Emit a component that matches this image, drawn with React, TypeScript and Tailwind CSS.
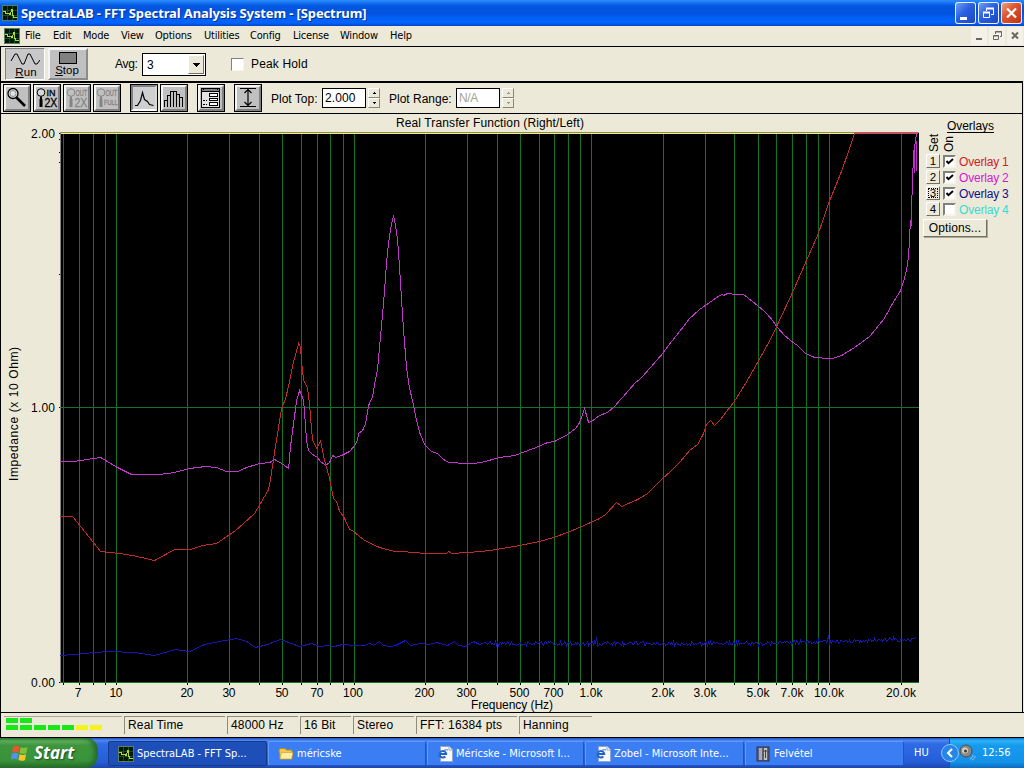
import { useState } from "react";
import type { ReactNode } from "react";

const menus = [
  { name: "File", width: "w-[28px]" },
  { name: "Edit", width: "w-[30px]" },
  { name: "Mode", width: "w-[38px]" },
  { name: "View", width: "w-[34px]" },
  { name: "Options", width: "w-[49px]" },
  { name: "Utilities", width: "w-[46px]" },
  { name: "Config", width: "w-[43px]" },
  { name: "License", width: "w-[47px]" },
  { name: "Window", width: "w-[50px]" },
  { name: "Help", width: "w-[30px]" },
];

const overlays = [
  { id: 1, color: "text-[#d01c24]", on: true },
  { id: 2, color: "text-[#d417d4]", on: true },
  { id: 3, color: "text-[#10108c]", on: true },
  { id: 4, color: "text-[#35dcd4]", on: false },
];

const statusCells = [
  { label: "Real Time", width: "w-[101px]" },
  { label: "48000 Hz", width: "w-[71px]" },
  { label: "16 Bit", width: "w-[51px]" },
  { label: "Stereo", width: "w-[61px]" },
  { label: "FFT: 16384 pts", width: "w-[101px]" },
  { label: "Hanning", width: "w-[73px]" },
];

const gridX = [
  63, 79, 93, 105, 116, 187, 229, 259, 282, 301, 317, 330, 343, 354, 425, 467,
  497, 520, 539, 554, 568, 580, 591, 663, 705, 734, 758, 776, 792, 806, 818,
  829, 901,
];

const freqLabels = [
  { x: 78, text: "7", w: 6 },
  { x: 116, text: "10", w: 13 },
  { x: 187, text: "20", w: 13 },
  { x: 229, text: "30", w: 13 },
  { x: 282, text: "50", w: 13 },
  { x: 317, text: "70", w: 13 },
  { x: 353, text: "100", w: 20 },
  { x: 424.5, text: "200", w: 20 },
  { x: 466.5, text: "300", w: 20 },
  { x: 519.5, text: "500", w: 20 },
  { x: 553.5, text: "700", w: 20 },
  { x: 591, text: "1.0k", w: 23 },
  { x: 663, text: "2.0k", w: 23 },
  { x: 705, text: "3.0k", w: 23 },
  { x: 758, text: "5.0k", w: 23 },
  { x: 792, text: "7.0k", w: 23 },
  { x: 829, text: "10.0k", w: 30 },
  { x: 901, text: "20.0k", w: 30 },
];

const overlay1 =
  "60,516 73,516 101,551 120,553 133,555 155,560 175,549 191,549 203,545 217,543 236,530 255,513 269,489 271,478 276,445 282,408 286,398 290,381 293,365 299,343 301,347 302,362 304,380 308,388 310,404 311,418 313,440 317,448 321,440 325,460 330,478 334,498 337,501 340,511 344,516 350,529 354,531 365,540 380,547 395,551 402,551 415,552 425,553 447,553 449,551 452,553 467,552 482,551 497,549 520,545 540,541 554,537 568,532 580,527 591,522 600,518 606,514 617,502 622,506 638,499 648,493 656,485 663,478 672,470 680,462 690,450 698,444 704,433 707,424 711,420 715,425 721,419 727,411 734,402 746,383 758,362 768,344 777,326 792,294 806,262 818,235 829,203 837,183 843,168 855,133 918,133";

const overlay2 =
  "60,461 74,461 101,457 116,466 132,474 160,474 175,472 190,468 206,466 217,467 227,471 238,471 247,467 260,463 270,462 275,459 282,463 289,468 291,445 297,400 300,390 304,400 307,440 309,450 313,454 318,457 321,461 326,465 330,462 333,455 336,457 342,455 350,451 355,445 358,439 359,433 363,430 366,423 369,405 373,396 375,384 378,368 381,335 384,302 387,262 389,242 391,228 394,215 396,225 398,240 400,268 402,300 404,330 407,368 410,388 414,405 416,416 420,432 425,444 432,451 438,453 444,459 449,462 467,463 472,463 482,462 500,457 515,455 539,446 548,442 555,441 568,434 576,428 580,422 585,408 589,422 592,421 600,415 608,412 615,406 620,400 623,397 628,391 636,382 641,378 650,368 663,353 672,341 680,331 690,318 700,309 710,302 717,297 722,294 724,295 728,293 736,294 744,294 749,298 758,305 766,312 773,320 777,326 785,335 792,341 798,345 806,353 815,357 829,358 833,358 842,355 855,347 870,336 884,319 893,303 901,290 904,281 907,269 909,256 910,235 911,220 912,225 912,205 913,180 914,150 915,172 915,146 917,133";

// Low-level trace: hand-read points up to 500 Hz, bin noise above that.
function buildOverlay3() {
  let points =
    "60,655 75,654 95,652 110,651 135,652 155,655 176,649 190,651 205,644 220,641 237,638 247,641 256,647 268,644 281,639 300,646 312,643 320,646 328,645 335,646 343,644 356,645 365,645 370,643 374,645 380,641 384,645 390,646 396,645 402,642 406,640 411,645 421,643 430,644 437,642 448,645 455,641 459,645 466,646 474,641 480,644 486,642";
  let seed = 17;
  for (let x = 488; x < 917; x++) {
    seed = (seed * 1103515245 + 12345) % 2147483648;
    const r = seed / 2147483648;
    const base = x < 760 ? 643 : 643 - (x - 760) * 0.028;
    let y = base + (r - 0.5) * 4;
    if (x === 597 || x === 829) y = base - 6;
    if (x === 598 || x === 830) y = base + 3;
    points += ` ${x},${Math.round(y)}`;
  }
  return points;
}

const overlay3 = buildOverlay3();

function AppIcon() {
  return (
    <svg width="16" height="16" viewBox="0 0 16 16" shapeRendering="crispEdges">
      <rect width="16" height="16" fill="#5d7d5f" />
      <rect x="1" y="1" width="14" height="14" fill="#04170a" />
      <path d="M5.5 1v14M10.5 1v14M1 5.5h14M1 10.5h14" stroke="#0c5420" />
      <path
        d="M1 6.500h2l1 2h3l1 1 2-5 1 6 1 2h3"
        fill="none"
        stroke="#b7d82c"
        strokeWidth="1.200"
      />
    </svg>
  );
}

function ToolButton({
  children,
  pressed,
  className = "",
}: {
  children: ReactNode;
  pressed?: boolean;
  className?: string;
}) {
  return (
    <button
      className={`h-7 w-7 border border-black ${
        pressed ? "bg-[#cfcfcf]" : "bg-[#c0c0c0]"
      } ${className}`}
    >
      <div
        className={`h-full w-full border-2 ${
          pressed
            ? "border-t-[#808080] border-l-[#808080] border-r-[#d8d8d8] border-b-white"
            : "border-t-[#f4f4f4] border-l-[#f4f4f4] border-r-[#808080] border-b-[#808080]"
        }`}
      >
        <svg
          width="26"
          height="26"
          viewBox="0 0 26 26"
          className="-mt-0.5 -ml-0.5 max-w-none"
          fontFamily="'Liberation Sans', sans-serif"
        >
          {children}
        </svg>
      </div>
    </button>
  );
}

function ZoomGlyph({
  top,
  bottom,
  disabled,
}: {
  top: string;
  bottom: string;
  disabled?: boolean;
}) {
  const color = disabled ? "#858585" : "#000";
  return (
    <g>
      <circle cx="7" cy="7.5" r="3.8" fill={disabled ? "none" : "#d8d8d8"} stroke={color} />
      <path d="M7 11.5V14" stroke={color} strokeWidth="2" />
      <path d="M7 14v8" stroke={color} strokeWidth="3" />
      <g fill={color} stroke={color} strokeWidth="0.3">
        <text
          transform={top === "IN" ? "translate(12.500 11)" : "translate(11.500 11) scale(0.620 1)"}
          fontSize="9"
        >
          {top}
        </text>
        <text
          transform={
            bottom === "2X" ? "translate(10.500 22) scale(0.880 1)" : "translate(10 20) scale(0.800 1)"
          }
          fontSize={bottom === "2X" ? 12 : 7}
        >
          {bottom}
        </text>
      </g>
    </g>
  );
}

function Spinner({ disabled }: { disabled?: boolean }) {
  const arrow = disabled ? "#9c9988" : "#000";
  return (
    <div className="flex h-5 w-3 flex-col">
      <div className="flex h-2.5 items-center justify-center border border-t-white border-l-white border-r-[#8a8778] border-b-[#8a8778]">
        <svg width="5" height="3" shapeRendering="crispEdges">
          <path d="M2 0h1v1h1v1H1V1h1z" fill={arrow} />
        </svg>
      </div>
      <div className="flex h-2.5 items-center justify-center border border-t-white border-l-white border-r-[#8a8778] border-b-[#8a8778]">
        <svg width="5" height="3" shapeRendering="crispEdges">
          <path d="M1 0h3v1H3v1H2V1H1z" fill={arrow} />
        </svg>
      </div>
    </div>
  );
}

function TitleBar() {
  return (
    <div className="flex h-[26px] items-center bg-[linear-gradient(180deg,#2a8cff_0%,#1d7cf5_8%,#0357e0_22%,#0253dd_50%,#0262fb_75%,#0264fe_88%,#0243c4_100%)] pr-[2px] pl-[2px]">
      <AppIcon />
      <span className="ml-[3px] flex-1 font-['Noto_Sans'] text-[13px] leading-[26px] font-bold tracking-[-0.12px] whitespace-nowrap text-white [text-shadow:1px_1px_#0a2f8c]">
        SpectraLAB - FFT Spectral Analysis System - [Spectrum]
      </span>
      <div className="flex gap-[2px]">
        <button className="h-[22px] w-[21px] rounded-[3px] border border-white/90 bg-[linear-gradient(135deg,#6f9ff5,#2a5fe0_45%,#1c48c4)]">
          <svg width="19" height="20">
            <path d="M4 15.5h7" stroke="#fff" strokeWidth="3" />
          </svg>
        </button>
        <button className="h-[22px] w-[21px] rounded-[3px] border border-white/90 bg-[linear-gradient(135deg,#6f9ff5,#2a5fe0_45%,#1c48c4)]">
          <svg width="19" height="20" fill="none" stroke="#fff">
            <path d="M7.500 8V5.500h7v6H12" />
            <path d="M7 5.500h8" strokeWidth="2" />
            <path d="M4.500 9.500h6v5h-6z" />
            <path d="M4 9.500h7" strokeWidth="2" />
          </svg>
        </button>
        <button className="h-[22px] w-[21px] rounded-[3px] border border-white/90 bg-[linear-gradient(135deg,#f0a080,#df5531_40%,#bd3412)]">
          <svg width="19" height="20">
            <path d="M5 5.500l9 9M14 5.500l-9 9" stroke="#fff" strokeWidth="2.200" />
          </svg>
        </button>
      </div>
    </div>
  );
}

function MenuBar() {
  return (
    <div className="flex h-5 items-center bg-[#ece9d8] pl-1 font-['DejaVu_Sans_Condensed','DejaVu_Sans'] text-[11px] text-black">
      <AppIcon />
      <div className="flex flex-1 pl-[5px]">
        {menus.map((menu) => (
          <span
            key={menu.name}
            className={`${menu.width} leading-[18px] tracking-[-0.2px] whitespace-nowrap`}
          >
            {menu.name}
          </span>
        ))}
      </div>
      <div className="flex h-[18px] gap-[2px] pr-[1px] text-[#6b695f]">
        <div className="w-4 bg-[#f4f2e8]">
          <svg width="16" height="18">
            <path d="M5 12h6" stroke="currentColor" strokeWidth="2" />
          </svg>
        </div>
        <div className="w-4 bg-[#f4f2e8]">
          <svg width="16" height="18" fill="none" stroke="currentColor">
            <path d="M6.500 7V4.500h6v5H11M6 5h7M4.500 8.500h5v4h-5zM4 9h6" />
          </svg>
        </div>
        <div className="w-4 bg-[#f4f2e8]">
          <svg width="16" height="18">
            <path d="M5 5.500l6 6M11 5.500l-6 6" stroke="currentColor" strokeWidth="2" />
          </svg>
        </div>
      </div>
    </div>
  );
}

function RunBar() {
  return (
    <div className="flex h-[35px] items-center border-t border-black pl-1">
      <button className="flex h-8 w-10 flex-col items-center border border-t-[#808080] border-l-[#808080] border-r-white border-b-white bg-[#c8c8c8] text-[11.5px]">
        <svg width="30" height="15" fill="none" stroke="#000" className="mt-[3px] shrink-0">
          <path d="M1 9L5 2h2l5 10h2L18 2h2l5 10h2l3-4" />
        </svg>
        <span className="-mt-[1px] ml-[2px] leading-[13px] tracking-[0.2px]">
          <u>R</u>un
        </span>
      </button>
      <button className="ml-[3px] flex h-8 w-10 flex-col items-center border-2 border-t-[#f4f4f4] border-l-[#f4f4f4] border-r-[#8b8b8b] border-b-[#8b8b8b] bg-[#c0c0c0] text-[11.5px]">
        <div className="mt-[2px] h-3 w-[18px] shrink-0 border border-black bg-[#808080]" />
        <span className="-mr-[1px] -ml-[3px] leading-[13px]">
          <u>S</u>top
        </span>
      </button>
      <span className="ml-[27px] w-[27px] text-[12px] tracking-[-0.3px]">Avg:</span>
      <div className="flex h-[23px] w-16 items-center border border-black bg-white pt-[1px] pl-1 text-[12px]">
        <span className="flex-1">3</span>
        <div className="mr-[1px] flex h-[19px] w-4 items-center justify-center border border-t-white border-l-white border-r-[#716f64] border-b-[#716f64] bg-[#ece9d8]">
          <svg width="7" height="4" shapeRendering="crispEdges">
            <path d="M0 0h7L3.500 4z" />
          </svg>
        </div>
      </div>
      <div className="ml-[25px] h-[13px] w-[13px] border border-t-[#808080] border-l-[#808080] border-r-[#f6f4ea] border-b-[#f6f4ea] bg-white" />
      <span className="ml-[7px] text-[12px] tracking-[0.15px]">Peak Hold</span>
    </div>
  );
}

function PlotBar() {
  return (
    <div className="flex h-[32px] items-center border-t-2 border-black pl-[2px] text-[12px]">
      <ToolButton>
        <circle cx="9" cy="8.500" r="5" fill="#e4e4e4" stroke="#000" strokeWidth="1.300" />
        <circle cx="9" cy="8.500" r="3" fill="none" stroke="#777" strokeWidth="0.800" />
        <path d="M12.500 12.500l8.500 8.500" stroke="#000" strokeWidth="2.600" />
      </ToolButton>
      <ToolButton className="ml-[2px]">
        <ZoomGlyph top="IN" bottom="2X" />
      </ToolButton>
      <ToolButton className="ml-[2px]">
        <ZoomGlyph top="OUT" bottom="2X" disabled />
      </ToolButton>
      <ToolButton className="ml-[2px]">
        <ZoomGlyph top="OUT" bottom="FULL" disabled />
      </ToolButton>
      <ToolButton className="ml-[9px]" pressed>
        <path
          d="M4 20.500h2.500l3-5 2-8 2 7 3 2 2 3 4 1"
          fill="none"
          stroke="#000"
          strokeWidth="1.200"
        />
      </ToolButton>
      <ToolButton className="ml-[2px]">
        <path
          d="M3.500 22v-7h3v-5h3V6.500h3V6h3v3.500h3V12h3v10M6.500 14v8M9.500 10v12M12.500 6.500V22M15.500 9v13M18.500 12v10"
          fill="none"
          stroke="#000"
          shapeRendering="crispEdges"
        />
      </ToolButton>
      <ToolButton className="ml-[9px]">
        <g shapeRendering="crispEdges" fill="none" stroke="#000">
          <rect x="3.500" y="3.500" width="18" height="19" fill="#e4e4e4" />
          <path d="M4 5h17" stroke="#808080" strokeWidth="2" />
          <path d="M3 6.500h19M5 4.500h1M19 4.500h1" />
          <path d="M5 15.500h4M5 19.500h4" strokeDasharray="2 1" />
          <rect x="11.500" y="8.500" width="8" height="3" fill="#fff" />
          <rect x="11.500" y="13.500" width="8" height="2" fill="#fff" />
          <rect x="11.500" y="17.500" width="8" height="3" fill="#fff" />
        </g>
      </ToolButton>
      <ToolButton className="ml-[9px]">
        <path
          d="M5 3.500h16M5 21.500h16M13 4v17M9.500 8L13 4.500 16.500 8M9.500 17l3.500 3.500 3.500-3.500"
          fill="none"
          stroke="#000"
          strokeWidth="1.200"
        />
      </ToolButton>
      <span className="mt-[2px] ml-[9px] w-[50px] whitespace-nowrap">Plot Top:</span>
      <div className="ml-[1px] flex h-5 w-[44px] items-center border border-black bg-white pl-[2px] tracking-[0.1px]">
        2.000
      </div>
      <div className="ml-[2px]">
        <Spinner />
      </div>
      <span className="mt-[2px] ml-[9px] w-[65px] whitespace-nowrap">Plot Range:</span>
      <div className="ml-[2px] flex h-5 w-[44px] items-center border border-black bg-white pl-[2px] tracking-[-0.4px] text-[#a5a294]">
        N/A
      </div>
      <div className="ml-[2px]">
        <Spinner disabled />
      </div>
    </div>
  );
}

function Chart() {
  return (
    <svg
      width="922"
      height="598"
      viewBox="1 114 922 598"
      fontFamily="'Liberation Sans', sans-serif"
      fontSize="12"
      className="block shrink-0"
    >
      <text x="396" y="127" textLength="188">
        Real Transfer Function (Right/Left)
      </text>
      <g shapeRendering="crispEdges">
        <rect x="60" y="132" width="859" height="551" fill="#000" />
        {gridX.map((x) => (
          <path key={x} d={`M${x}.500 134V683`} stroke="#117325" />
        ))}
        <path d="M60 407.500h859M60 682.500h859" stroke="#117325" />
        <path d="M60.500 132v551" stroke="#85857d" />
        <path d="M60 132.500h859" stroke="#8f8c50" />
        <path d="M61 133.500h857" stroke="#f0ee84" />
        {gridX.map((x) => (
          <path key={x} d={`M${x}.500 683v2`} stroke="#000" />
        ))}
        <path
          d="M59 133.500h1M59 139.500h1M59 152.500h1M59 162.500h1M59 274.500h1M59 407.500h1M59 682.500h1"
          stroke="#000"
        />
        <g fill="none" transform="translate(-0.400 0.500)">
          <polyline points={overlay3} stroke="#1717b4" />
          <polyline points={overlay2} stroke="#c238ca" />
          <polyline points={overlay1} stroke="#c02c2c" />
          <path d="M911.500 225v-20M914.500 145v25M916.500 170v-30" stroke="#c42acb" />
        </g>
        <path d="M855 132.500h63" stroke="#a8606a" />
        <path d="M855 133.500h63" stroke="#d8484c" />
      </g>
      <text x="31" y="138" textLength="24">2.00</text>
      <text x="31" y="412" textLength="24">1.00</text>
      <text x="31" y="687" textLength="24">0.00</text>
      <text transform="translate(18 481) rotate(-90)" textLength="134">
        Impedance (x 10 Ohm)
      </text>
      {freqLabels.map((label) => (
        <text
          key={label.text}
          x={label.x}
          y="697"
          textAnchor="middle"
          textLength={label.w}
        >
          {label.text}
        </text>
      ))}
      <text x="471" y="709" textLength="82">
        Frequency (Hz)
      </text>
    </svg>
  );
}

function OverlayPanel() {
  const [enabled, setEnabled] = useState(overlays.map((o) => o.on));

  return (
    <div className="flex flex-1 flex-col text-[12px]">
      <div className="mt-[5px] ml-[24px] h-[14px] leading-[14px] tracking-[-0.05px] underline underline-offset-2">
        Overlays
      </div>
      <div className="flex h-[20px] items-end pb-[1px] leading-[14px]">
        <span className="ml-[4px] rotate-180 [writing-mode:vertical-rl]">Set</span>
        <span className="ml-[1px] rotate-180 [writing-mode:vertical-rl]">On</span>
      </div>
      {overlays.map((overlay, i) => (
        <div key={overlay.id} className="flex h-4 items-center pl-[3px]">
          <button
            className={`h-[14px] w-[14px] border border-t-white border-l-white border-r-[#716f64] border-b-[#716f64] text-center text-[11.5px] leading-[12px] ${
              overlay.id === 3 ? "outline-1 -outline-offset-3 outline-dotted outline-black" : ""
            }`}
          >
            {overlay.id}
          </button>
          <button
            onClick={() => setEnabled(enabled.map((v, j) => (j === i ? !v : v)))}
            className="ml-[3px] flex h-[13px] w-[13px] items-center justify-center border-2 border-t-[#808080] border-l-[#808080] border-r-[#f6f4ea] border-b-[#f6f4ea] bg-white"
          >
            {enabled[i] && (
              <svg width="9" height="9" className="shrink-0">
                <path d="M1.500 4l2 2.200L8 2" fill="none" stroke="#000" strokeWidth="2" />
              </svg>
            )}
          </button>
          <span
            className={`mt-[1px] ml-[3px] leading-4 tracking-[-0.2px] whitespace-nowrap ${overlay.color}`}
          >
            Overlay {overlay.id}
          </span>
        </div>
      ))}
      <button className="mt-[2px] h-[18px] w-[64px] border border-t-white border-l-white border-r-[#716f64] border-b-[#716f64] text-center leading-[15px] tracking-[0.1px] shadow-[1px_1px_#aca899]">
        Options...
      </button>
    </div>
  );
}

function StatusBar() {
  return (
    <div className="flex h-[26px] border-y border-black pt-[3px] text-[12px]">
      <div className="ml-[3px] flex h-[18px] w-[118px] items-end gap-[2px] border-t border-[#aca899] pb-[4px] pl-[2px]">
        {[0, 1].map((i) => (
          <div key={i} className="flex w-3 flex-col gap-[2px]">
            <div className="h-[5px] bg-[#18e818]" />
            <div className="h-[5px] bg-[#18e818]" />
          </div>
        ))}
        {[0, 1, 2].map((i) => (
          <div key={i} className="h-[5px] w-3 bg-[#18e818]" />
        ))}
        <div className="h-[5px] w-3 bg-[#f4f41c]" />
        <div className="h-[5px] w-3 bg-[#f4f41c]" />
      </div>
      <div className="flex gap-[2px] pl-[2px]">
        {statusCells.map((cell) => (
          <div
            key={cell.label}
            className={`${cell.width} h-[18px] border-t border-l border-[#8f8c7e] pl-[3px] leading-[17px] tracking-[0.15px] whitespace-nowrap`}
          >
            {cell.label}
          </div>
        ))}
      </div>
    </div>
  );
}

function FolderIcon() {
  return (
    <svg width="16" height="16">
      <path d="M1 4l1-1.500h5L8.500 4H14v9H2z" fill="#f0c84c" stroke="#b98c1c" />
      <path d="M3.500 6.500H15L13.500 13H2z" fill="#fdeea4" stroke="#c99b2c" strokeWidth=".6" />
    </svg>
  );
}

function ExplorerIcon() {
  return (
    <svg width="16" height="16" fill="none">
      <path d="M3.500.5h9l3 3v12h-12z" fill="#f7f8fb" stroke="#93a5c8" />
      <path d="M12 .5v3.500h3.500" stroke="#93a5c8" />
      <path d="M3 8h6.200A3.300 3.300 0 1 0 8.300 10.500" stroke="#2362c4" strokeWidth="2" />
      <path d="M1 12C0 8 7 2.500 11 4" stroke="#2f7be0" />
    </svg>
  );
}

function RecordIcon() {
  return (
    <svg width="16" height="16">
      <rect x="2" y="1" width="12" height="14" fill="#5d6079" stroke="#2d304e" />
      <rect x="4" y="2" width="3" height="12" fill="#a8a9b5" />
      <rect x="9" y="2" width="3" height="12" fill="#c3c1c0" />
      <path d="M8 5h4M8 9h1M10.500 4v8" stroke="#443d49" />
    </svg>
  );
}

const tasks = [
  { label: "SpectraLAB - FFT Sp...", icon: AppIcon, width: "w-[159px]", active: true },
  { label: "méricske", icon: FolderIcon, width: "w-[158px]", active: false },
  { label: "Méricske - Microsoft I...", icon: ExplorerIcon, width: "w-[157px]", active: false },
  { label: "Zobel - Microsoft Inte...", icon: ExplorerIcon, width: "w-[159px]", active: false },
  { label: "Felvétel", icon: RecordIcon, width: "w-[159px]", active: false },
];

function Taskbar() {
  return (
    <div className="flex h-[30px] bg-[linear-gradient(180deg,#1f4fbe_0%,#4b87ee_8%,#2f6be4_20%,#255dd9_80%,#1c46ad_100%)] font-['DejaVu_Sans_Condensed','DejaVu_Sans'] text-[11px] text-white">
      <button className="flex w-[98px] items-center rounded-r-[12px] bg-[linear-gradient(180deg,#2e7a2c_0%,#61b160_9%,#3d963c_25%,#3a933a_75%,#266d27_100%)] pl-[10px] shadow-[inset_-4px_0_5px_#236a30]">
        <svg width="20" height="19" viewBox="0 0 20 19">
          <path d="M3 3c2-1.500 4-1.500 6.500-.3L8.500 8.500C6 7.500 4 7.500 2 8.700z" fill="#e8562f" />
          <path d="M10.500 3.200c2 1 4.500 1 7-.2L16.300 9c-2.300 1.200-4.600 1-6.700 0z" fill="#82c13c" />
          <path d="M1.800 9.800c2-1.200 4-1.200 6.500-.2L7.300 15.500C5 14.500 3 14.500 1 15.800z" fill="#5791ee" />
          <path d="M9.400 10.200c2 1 4.500 1 6.700 0L15 16c-2.200 1.200-4.500 1-6.500 0z" fill="#f6c52d" />
        </svg>
        <span className="ml-[4px] font-['Open_Sans'] text-[17px] leading-[28px] font-bold italic [text-shadow:1px_1px_2px_#1c4a1c]">
          Start
        </span>
      </button>
      <div className="ml-[10px] flex gap-[1px] pt-[3px]">
        {tasks.map((task) => (
          <div
            key={task.label}
            className={`${task.width} flex h-[25px] items-center rounded-[2px] border pl-[9px] ${
              task.active
                ? "border-[#163a8c] bg-[#1e4fb8]"
                : "border-t-[#5f9cff] border-l-[#5f9cff] border-r-[#2154c2] border-b-[#2154c2] bg-[#3b7ef3]"
            }`}
          >
            <task.icon />
            <span className="ml-[3px] pt-[1px] whitespace-nowrap">
              {task.label}
            </span>
          </div>
        ))}
      </div>
      <div className="flex flex-1 items-center pl-[10px]">
        <span className="w-[21px] pt-[1px]">HU</span>
      </div>
      <div className="flex w-[75px] items-center bg-[linear-gradient(180deg,#0f78d4_0%,#2fb2f4_9%,#159aee_25%,#1392e8_80%,#0d6bbd_100%)] shadow-[inset_1px_0_#0d56b0]">
        <svg width="20" height="20" className="-ml-[9px] shrink-0">
          <circle cx="10" cy="10" r="8.500" fill="#2685e6" stroke="#8cc8f8" />
          <path d="M12 6l-4 4 4 4" fill="none" stroke="#fff" strokeWidth="2" />
        </svg>
        <svg width="18" height="18" className="-ml-[2px] shrink-0">
          <circle cx="8" cy="7" r="6" fill="#8b8985" stroke="#4c4c50" />
          <circle cx="7" cy="6.500" r="3" fill="#d6cfc4" />
          <circle cx="7.500" cy="7" r="1.500" fill="#42342c" />
          <path d="M12 15c2-1 3-2 3-4M14 16c2-1 3-2 3-4" fill="none" stroke="#9fc0e8" />
        </svg>
        <span className="ml-[6px] pt-[1px]">12:56</span>
      </div>
    </div>
  );
}

export default function App() {
  return (
    <div className="h-[768px] w-[1024px] overflow-hidden bg-[#ece9d8] font-['Liberation_Sans',sans-serif] text-black">
      <TitleBar />
      <MenuBar />
      <div className="border-l border-black">
        <RunBar />
        <div className="mr-[1px] border-r border-black">
          <PlotBar />
          <div className="flex h-[599px] border-t border-black">
            <Chart />
            <OverlayPanel />
          </div>
        </div>
        <StatusBar />
      </div>
      <Taskbar />
    </div>
  );
}
